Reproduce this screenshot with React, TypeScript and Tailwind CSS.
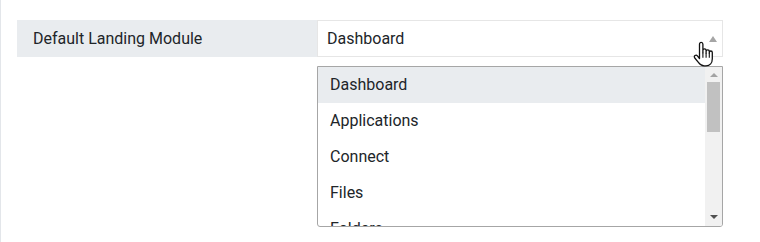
import React from 'react'

const OPTIONS = ['Dashboard', 'Applications', 'Connect', 'Files', 'Folders']

function HandCursor() {
  return (
    <svg
      className="absolute left-[692px] top-[41px] pointer-events-none"
      width="22"
      height="28"
      viewBox="0 0 22 28"
    >
      <path
        d="M6.5 17.5V3.2c0-1.1.8-1.9 1.7-1.9s1.7.8 1.7 1.9v8.6V9.6c0-1 .8-1.7 1.6-1.7s1.6.7 1.6 1.7v2.4-1.5c0-1 .8-1.6 1.6-1.6s1.6.6 1.6 1.6v1.9-.9c0-.9.7-1.5 1.5-1.5s1.5.6 1.5 1.5v6.3c0 3.9-2.4 7-6.3 7h-1.9c-2.6 0-4.1-1.2-5.5-3.2L1.8 17c-.6-.8-.5-1.8.2-2.4.8-.6 1.8-.4 2.4.3z"
        fill="#fff"
        stroke="#111"
        strokeWidth="1.3"
        strokeLinejoin="round"
      />
      <path d="M9.9 11.8v5M13.1 12v4.8M16.3 12.4v4.4" stroke="#111" strokeWidth="1.1" />
    </svg>
  )
}

export default function App() {
  return (
    <div
      className="relative h-[242px] w-[760px] bg-white border-l border-[#e3e6ea] text-[#212529]"
      style={{ fontFamily: 'Roboto, "Liberation Sans", sans-serif' }}
    >
      <div className="pt-5 pl-4">
        {/* Fila de ajuste */}
        <div className="flex h-[37px] w-[706px]">
          <div className="flex items-center w-[300px] bg-[#e9ecef] pl-4 text-base">
            Default Landing Module
          </div>
          <div className="flex flex-1 items-center justify-between border border-[#e6e6e6] bg-white pl-[9px] pr-[5px] text-base">
            <span>Dashboard</span>
            <span className="mt-px h-0 w-0 border-x-[4px] border-b-[6px] border-x-transparent border-b-[#a5a5a5]" />
          </div>
        </div>

        {/* Lista desplegable */}
        <div className="ml-[300px] mt-[9px] flex h-[161px] w-[406px] overflow-hidden rounded-b-[3px] border border-[#a6a6a6] bg-white">
          <ul className="flex-1">
            {OPTIONS.map((opt, idx) => (
              <li
                key={opt}
                className={
                  idx === 0
                    ? 'flex h-9 items-center bg-[#e9ecef] pl-3 text-base'
                    : 'flex h-9 items-center pl-3 text-base'
                }
              >
                {opt}
              </li>
            ))}
          </ul>
          {/* Barra de scroll */}
          <div className="flex w-[17px] flex-col items-center bg-[#f1f1f1]">
            <span className="mt-[6px] h-0 w-0 border-x-[4px] border-b-[4px] border-x-transparent border-b-[#a3a3a3]" />
            <div className="mt-[5px] h-[50px] w-[13px] bg-[#c1c1c1]" />
            <div className="flex-1" />
            <span className="mb-[7px] h-0 w-0 border-x-[4px] border-t-[4px] border-x-transparent border-t-[#505050]" />
          </div>
        </div>
      </div>
      <HandCursor />
    </div>
  )
}
